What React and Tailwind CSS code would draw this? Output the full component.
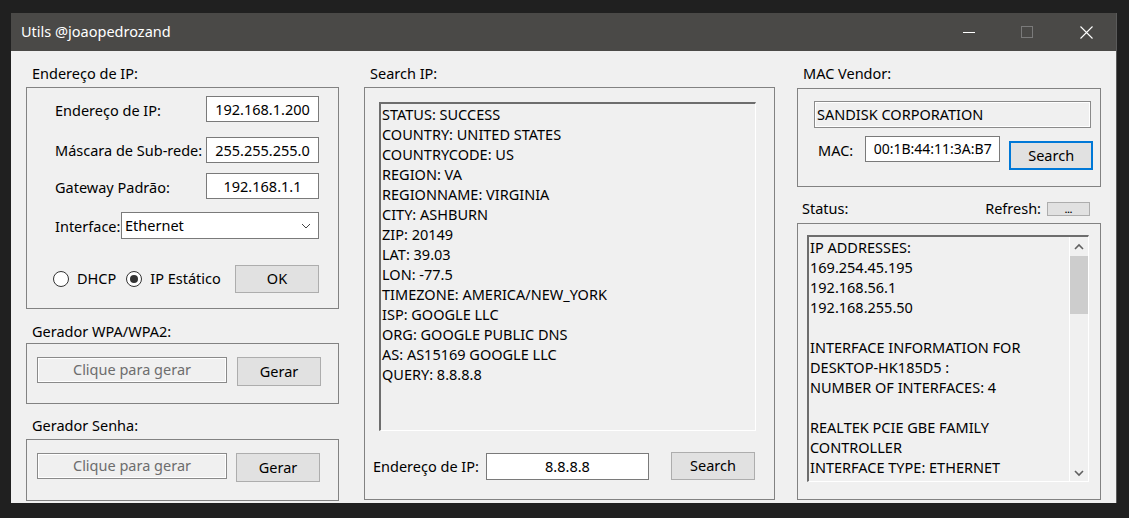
const font = { fontFamily: '"Noto Sans", "Open Sans", sans-serif' }

const searchLines = [
  'STATUS: SUCCESS',
  'COUNTRY: UNITED STATES',
  'COUNTRYCODE: US',
  'REGION: VA',
  'REGIONNAME: VIRGINIA',
  'CITY: ASHBURN',
  'ZIP: 20149',
  'LAT: 39.03',
  'LON: -77.5',
  'TIMEZONE: AMERICA/NEW_YORK',
  'ISP: GOOGLE LLC',
  'ORG: GOOGLE PUBLIC DNS',
  'AS: AS15169 GOOGLE LLC',
  'QUERY: 8.8.8.8',
]

const statusLines = [
  'IP ADDRESSES:',
  '169.254.45.195',
  '192.168.56.1',
  '192.168.255.50',
  '',
  'INTERFACE INFORMATION FOR',
  'DESKTOP-HK185D5 :',
  'NUMBER OF INTERFACES: 4',
  '',
  'REALTEK PCIE GBE FAMILY',
  'CONTROLLER',
  'INTERFACE TYPE: ETHERNET',
]

function TextBox({ children, className = '' }) {
  return (
    <div className={`flex items-center justify-center border border-[#7a7a7a] bg-white leading-none ${className}`}>
      {children}
    </div>
  )
}

function DisabledBox({ children, className = '' }) {
  return (
    <div className={`flex items-center justify-center border border-[#8a8a8a] bg-[#f0f0f0] text-[#6d6d6d] shadow-[inset_0_0_0_1px_#ffffff] ${className}`}>
      {children}
    </div>
  )
}

function Button({ children, className = '' }) {
  return (
    <div className={`flex items-center justify-center border border-[#adadad] bg-[#e1e1e1] ${className}`}>
      {children}
    </div>
  )
}

function Radio({ checked, label }) {
  return (
    <div className="flex items-center gap-[8px]">
      <div className="flex h-[16px] w-[16px] items-center justify-center rounded-full border border-[#333] bg-white">
        {checked ? <div className="h-[8px] w-[8px] rounded-full bg-[#333]" /> : null}
      </div>
      <span>{label}</span>
    </div>
  )
}

function GroupLabel({ children, className = '' }) {
  return <div className={`pl-[6px] leading-[20px] ${className}`}>{children}</div>
}

function Chevron({ up }) {
  return (
    <svg width="10" height="7" viewBox="0 0 10 7">
      <polyline
        points={up ? '1,6 5,2 9,6' : '1,1 5,5 9,1'}
        fill="none"
        stroke="#606060"
        strokeWidth="1.6"
      />
    </svg>
  )
}

export default function App() {
  return (
    <div className="min-h-[518px] w-[1129px] bg-[#202020] pl-[11px] pt-[13px] text-[14.5px] text-black" style={font}>
      <div className="w-[1106px] border-r border-[#5a5a5a]">
        <div className="flex h-[38px] items-center bg-[#4a4947] text-white">
          <span className="pl-[10px] text-[14.5px]">Utils @joaopedrozand</span>
          <div className="flex-1" />
          <div className="flex h-full w-[58px] items-center justify-center">
            <div className="h-px w-[12px] bg-white" />
          </div>
          <div className="flex h-full w-[58px] items-center justify-center">
            <div className="h-[12px] w-[12px] border border-[#7a7a7a]" />
          </div>
          <div className="flex h-full w-[60px] items-center justify-center">
            <svg width="13" height="13" viewBox="0 0 13 13">
              <path d="M0.5 0.5 L12.5 12.5 M12.5 0.5 L0.5 12.5" stroke="#fff" strokeWidth="1.1" />
            </svg>
          </div>
        </div>

        <div className="flex h-[452px] bg-[#f0f0f0] pl-[15px]">
          {/* coluna esquerda */}
          <div className="flex w-[313px] flex-col">
            <GroupLabel className="pt-[12px] pb-[4px]">Endereço de IP:</GroupLabel>
            <div className="flex h-[222px] flex-col border border-[#828282] pl-[28px] pr-[19px] pt-[8px]">
              <div className="flex h-[26px] items-center justify-between">
                <span className="pt-[4px]">Endereço de IP:</span>
                <TextBox className="h-[26px] w-[113px]">192.168.1.200</TextBox>
              </div>
              <div className="mt-[15px] flex h-[26px] items-center justify-between">
                <span className="pt-[1px]">Máscara de Sub-rede:</span>
                <TextBox className="h-[26px] w-[113px]">255.255.255.0</TextBox>
              </div>
              <div className="mt-[10px] flex h-[26px] items-center justify-between">
                <span className="pt-[4px]">Gateway Padrão:</span>
                <TextBox className="h-[26px] w-[113px]">192.168.1.1</TextBox>
              </div>
              <div className="mt-[13px] flex h-[27px] items-center justify-between">
                <span className="pt-[2px]">Interface:</span>
                <div className="flex h-[27px] w-[198px] items-center justify-between border border-[#7a7a7a] bg-white pl-[3px] pr-[7px]">
                  <span>Ethernet</span>
                  <svg width="10" height="6" viewBox="0 0 10 6">
                    <polyline points="1,1 5,5 9,1" fill="none" stroke="#444" strokeWidth="1" />
                  </svg>
                </div>
              </div>
              <div className="mt-[26px] flex h-[28px] items-center justify-between">
                <div className="-ml-[2px] flex items-center gap-[10px]">
                  <Radio label="DHCP" />
                  <Radio checked label="IP Estático" />
                </div>
                <Button className="h-[28px] w-[84px]">OK</Button>
              </div>
            </div>

            <GroupLabel className="pt-[12px] pb-[2px]">Gerador WPA/WPA2:</GroupLabel>
            <div className="flex h-[61px] items-start gap-[10px] border border-[#828282] pl-[10px] pt-[13px]">
              <DisabledBox className="h-[26px] w-[190px]">Clique para gerar</DisabledBox>
              <Button className="h-[29px] w-[84px]">Gerar</Button>
            </div>

            <GroupLabel className="pt-[11px] pb-[4px]">Gerador Senha:</GroupLabel>
            <div className="flex h-[62px] items-start gap-[9px] border border-[#828282] pl-[10px] pt-[13px]">
              <DisabledBox className="h-[26px] w-[190px]">Clique para gerar</DisabledBox>
              <Button className="h-[29px] w-[84px]">Gerar</Button>
            </div>
          </div>

          {/* coluna do meio */}
          <div className="ml-[25px] flex w-[411px] flex-col">
            <GroupLabel className="pt-[12px] pb-[4px] pl-[4px]">Search IP:</GroupLabel>
            <div className="flex h-[413px] flex-col border border-[#828282] pl-[14px] pt-[14px]">
              <div className="h-[329px] w-[377px] border-t-2 border-l-2 border-b border-r border-t-[#6d6d6d] border-l-[#6d6d6d] border-b-white border-r-white pl-[1px] leading-[20px]">
                {searchLines.map((line) => (
                  <div key={line}>{line}</div>
                ))}
              </div>
              <div className="mt-[21px] flex items-center">
                <span className="-ml-[6px] w-[113px] pt-[2px]">Endereço de IP:</span>
                <TextBox className="h-[27px] w-[163px]">8.8.8.8</TextBox>
                <Button className="ml-[22px] h-[28px] w-[84px]">Search</Button>
              </div>
            </div>
          </div>

          {/* coluna direita */}
          <div className="ml-[22px] flex w-[304px] flex-col">
            <GroupLabel className="pt-[12px] pb-[5px] pl-[5px]">MAC Vendor:</GroupLabel>
            <div className="flex h-[99px] flex-col border border-[#828282] pl-[16px] pt-[12px]">
              <div className="flex h-[27px] w-[277px] items-center border border-[#8a8a8a] bg-[#f0f0f0] pl-[2px] shadow-[inset_0_0_0_1px_#ffffff]">
                SANDISK CORPORATION
              </div>
              <div className="mt-[8px] flex items-start">
                <span className="ml-[4px] mt-[4px]">MAC:</span>
                <TextBox className="ml-[12px] h-[26px] w-[135px] text-[14px]">00:1B:44:11:3A:B7</TextBox>
                <div className="ml-[9px] mt-[5px] flex h-[29px] w-[84px] items-center justify-center border-2 border-[#0078d7] bg-[#e1e1e1]">
                  Search
                </div>
              </div>
            </div>

            <div className="flex h-[36px] items-center justify-between pl-[5px] pr-[11px] pt-[8px]">
              <span>Status:</span>
              <div className="flex items-center gap-[6px]">
                <span>Refresh:</span>
                <div className="flex h-[14px] w-[43px] items-center justify-center border border-[#adadad] bg-[#e1e1e1] text-[9px] font-bold leading-none">
                  ...
                </div>
              </div>
            </div>
            <div className="flex h-[277px] flex-col border border-[#828282] pl-[9px] pt-[11px]">
              <div className="flex h-[247px] w-[282px] overflow-hidden border-t-2 border-l-2 border-b border-r border-t-[#6d6d6d] border-l-[#6d6d6d] border-b-white border-r-white">
                <div className="flex-1 overflow-hidden pl-[1px] leading-[20px]">
                  {statusLines.map((line, i) => (
                    <div key={i} className="h-[20px] whitespace-nowrap">{line}</div>
                  ))}
                </div>
                <div className="flex w-[19px] flex-col items-center border-l border-white pb-[4px] pt-[6px]">
                  <Chevron up />
                  <div className="mt-[6px] h-[58px] w-[19px] bg-[#cdcdcd]" />
                  <div className="flex-1" />
                  <Chevron />
                </div>
              </div>
            </div>
          </div>
        </div>
      </div>
    </div>
  )
}
